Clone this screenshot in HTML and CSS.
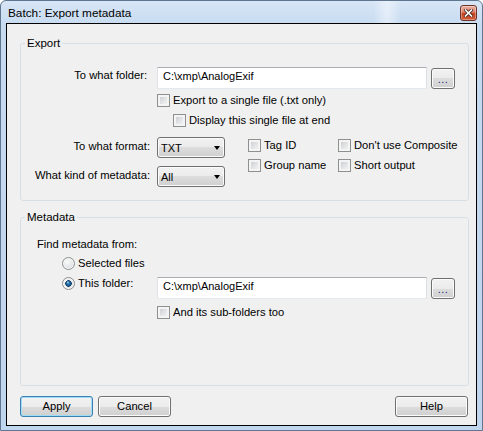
FILE: index.html
```html
<!DOCTYPE html>
<html>
<head>
<meta charset="utf-8">
<title>Batch: Export metadata</title>
<link rel="stylesheet" href="styles.css">
</head>
<body>
<div class="window">
  <div class="titlebar">
    <span class="title">Batch: Export metadata</span>
    <span class="close">
      <svg width="9" height="8" viewBox="0 0 9 8">
        <path d="M1.5 1 L7.5 7 M7.5 1 L1.5 7" stroke="#4a2a22" stroke-width="3.2" stroke-linecap="square"/>
        <path d="M1.5 1 L7.5 7 M7.5 1 L1.5 7" stroke="#ffffff" stroke-width="1.6" stroke-linecap="square"/>
      </svg>
    </span>
  </div>
  <div class="client">
    <fieldset class="group group-export">
      <legend>Export</legend>
      <div class="row">
        <label class="lbl lbl-folder">To what folder:</label>
        <div class="textbox">C:\xmp\AnalogExif</div>
        <span class="browse">...</span>
      </div>
      <div class="check single"><span class="cb"></span>Export to a single file (.txt only)</div>
      <div class="check display"><span class="cb"></span>Display this single file at end</div>
      <div class="options">
        <div class="combos">
          <label class="clbl">To what format:</label>
          <div class="combo"><span>TXT</span><span class="arrow"></span></div>
          <label class="clbl">What kind of metadata:</label>
          <div class="combo"><span>All</span><span class="arrow"></span></div>
        </div>
        <div class="checks">
          <div class="check"><span class="cb"></span>Tag ID</div>
          <div class="check"><span class="cb"></span>Don't use Composite</div>
          <div class="check"><span class="cb"></span>Group name</div>
          <div class="check"><span class="cb"></span>Short output</div>
        </div>
      </div>
    </fieldset>
    <fieldset class="group group-meta">
      <legend>Metadata</legend>
      <div class="find">Find metadata from:</div>
      <div class="radio selected-files"><span class="rb"></span>Selected files</div>
      <div class="row row-this">
        <div class="radio this-folder"><span class="rb checked"></span>This folder:</div>
        <div class="textbox">C:\xmp\AnalogExif</div>
        <span class="browse">...</span>
      </div>
      <div class="check subfolders"><span class="cb"></span>And its sub-folders too</div>
    </fieldset>
    <div class="buttons">
      <button class="btn default">Apply</button>
      <button class="btn">Cancel</button>
      <span class="spacer"></span>
      <button class="btn help">Help</button>
    </div>
  </div>
</div>
</body>
</html>
```
FILE: styles.css
```css
html, body {
  margin: 0;
  padding: 0;
  background: #ffffff;
}
body {
  font-family: "Liberation Sans", Arial, sans-serif;
  font-size: 11.2px;
  color: #000;
}
.window {
  width: 483px;
  height: 431px;
  box-sizing: border-box;
  border: 1px solid #60758e;
  border-radius: 6px 6px 0 0;
  background: linear-gradient(#d7e6f6 0, #c6daf0 26px, #c0d5ee 100%);
  padding: 0 5px 4px 5px;
  display: flex;
  flex-direction: column;
  overflow: hidden;
}
.titlebar {
  height: 22px;
  flex: none;
  display: flex;
  align-items: flex-start;
  margin: 0 -5px;
  padding: 0 5px;
  background: linear-gradient(to right, rgba(255,255,255,0) 372px, rgba(255,255,255,0.45) 386px, rgba(255,255,255,0) 400px);
}
.title {
  margin-left: 2px;
  padding-top: 5px;
  line-height: 15px;
  white-space: nowrap;
  font-size: 11.8px;
}
.close {
  margin-left: auto;
  margin-top: 4px;
  width: 17px;
  height: 16px;
  box-sizing: border-box;
  border: 1px solid #6e3326;
  border-radius: 3px;
  background: linear-gradient(#ebb2a3 0, #dc8069 45%, #c7441f 52%, #cf5a35 100%);
  box-shadow: inset 0 0 0 1px rgba(255,255,255,0.35);
  display: flex;
  align-items: center;
  justify-content: center;
}
.client {
  flex: 1;
  border: 1px solid #000;
  background: #f0f0f0;
  display: flex;
  flex-direction: column;
  padding: 0 7px 8px 13px;
  min-height: 0;
}
.group {
  margin: 0;
  padding: 0;
  border: 1px solid #d5dfe5;
  border-radius: 3px;
  min-width: 0;
}
.group legend {
  padding: 0 2px;
  margin-left: 4px;
  line-height: 15px;
  font-size: 11.5px;
}
.group-export {
  margin-top: 12px;
  padding: 16px 0 13px 0;
}
.group-meta {
  margin-top: 9px;
  padding: 11px 0 0 0;
  flex: 1;
}
.row {
  display: flex;
  align-items: flex-start;
}
.lbl {
  width: 129px;
  margin-right: 7px;
  box-sizing: border-box;
  text-align: right;
  line-height: 15px;
  flex: none;
  white-space: nowrap;
  padding-top: 1px;
}
.lbl-folder {
  padding-right: 3px;
}
.textbox {
  width: 270px;
  height: 22px;
  box-sizing: border-box;
  border: 1px solid;
  border-color: #abadb3 #dbdfe6 #e3e9ef #e2e3ea;
  background: #fff;
  font-size: 11px;
  line-height: 17px;
  padding-left: 5px;
  flex: none;
}
.browse {
  margin-left: 4px;
  margin-top: 1px;
  width: 24px;
  height: 21px;
  box-sizing: border-box;
  border: 1px solid #707070;
  border-radius: 3px;
  background: linear-gradient(#f2f2f2 0, #ebebeb 50%, #dddddd 50%, #cfcfcf 100%);
  box-shadow: inset 0 0 0 1px #fbfbfb;
  text-align: center;
  font-size: 11px;
  line-height: 19px;
  padding-top: 1px;
  color: #1b1b7a;
  letter-spacing: 0.5px;
  flex: none;
}
.check {
  display: flex;
  align-items: center;
  height: 15px;
  line-height: 15px;
  white-space: nowrap;
}
.cb {
  width: 13px;
  height: 13px;
  box-sizing: border-box;
  margin-right: 3px;
  flex: none;
  border: 1px solid #8e8f8f;
  background: linear-gradient(135deg, #c3c6cb 0%, #e6e7e9 60%, #f6f6f6 100%);
  box-shadow: inset 0 0 0 2px #f4f4f4;
}
.single {
  margin-left: 136px;
  margin-top: 4px;
}
.display {
  margin-left: 152px;
  margin-top: 5px;
}
.options {
  display: flex;
  align-items: flex-start;
  margin-top: 9px;
}
.combos {
  display: grid;
  grid-template-columns: 129px 68px;
  column-gap: 7px;
  row-gap: 8px;
}
.clbl {
  text-align: right;
  line-height: 15px;
  padding-top: 2px;
  white-space: nowrap;
}
.combo {
  height: 21px;
  box-sizing: border-box;
  border: 1px solid #707070;
  border-radius: 3px;
  background: linear-gradient(#f2f2f2 0, #ebebeb 50%, #dddddd 50%, #cfcfcf 100%);
  box-shadow: inset 0 0 0 1px #fbfbfb;
  font-size: 11px;
  line-height: 19px;
  padding: 1px 0 0 3px;
  display: flex;
  align-items: flex-start;
}
.arrow {
  margin-left: auto;
  margin-right: 4px;
  margin-top: 7px;
  width: 0;
  height: 0;
  border-left: 3.5px solid transparent;
  border-right: 3.5px solid transparent;
  border-top: 4px solid #000;
}
.checks {
  display: grid;
  grid-template-columns: 90px auto;
  row-gap: 5px;
  margin-left: 23px;
  margin-top: 1px;
}
.find {
  margin-left: 16px;
  line-height: 15px;
  padding-top: 1px;
}
.radio {
  display: flex;
  align-items: center;
  height: 15px;
  line-height: 15px;
  white-space: nowrap;
  margin-left: 41px;
}
.selected-files {
  margin-top: 4px;
}
.row-this {
  margin-top: 5px;
}
.this-folder {
  width: 95px;
  flex: none;
}
.row-this .textbox {
  margin-top: 1px;
}
.row-this .browse {
  margin-top: 2px;
}
.rb {
  width: 13px;
  height: 13px;
  box-sizing: border-box;
  border-radius: 50%;
  margin-right: 3px;
  flex: none;
  border: 1px solid #8e8f8f;
  background: radial-gradient(circle at 40% 35%, #fafafa 0, #e4e5e7 55%, #cfd1d4 100%);
  box-shadow: inset 0 0 0 1px #f6f6f6;
}
.rb.checked {
  background:
    radial-gradient(circle at 45% 40%, #a6e2fb 0, rgba(166,226,251,0) 1.6px),
    radial-gradient(circle at 50% 50%, #2f7cb6 0, #17588d 2.2px, #0f3c68 3px, rgba(15,60,104,0) 3.5px),
    radial-gradient(circle at 40% 35%, #fafafa 0, #e4e5e7 55%, #cfd1d4 100%);
}
.subfolders {
  margin-left: 136px;
  margin-top: 6px;
}
.buttons {
  display: flex;
  margin-top: 10px;
  gap: 5px;
  flex: none;
}
.spacer {
  flex: 1;
}
.btn {
  width: 73px;
  height: 21px;
  box-sizing: border-box;
  border: 1px solid #707070;
  border-radius: 3px;
  background: linear-gradient(#f2f2f2 0, #ebebeb 50%, #dddddd 50%, #cfcfcf 100%);
  box-shadow: inset 0 0 0 1px #fcfcfc;
  font-family: "Liberation Sans", Arial, sans-serif;
  font-size: 11.2px;
  line-height: 19px;
  color: #000;
  padding: 0;
  margin: 0;
}
.btn.default {
  border-color: #3c7fb1;
  box-shadow: inset 0 0 0 1px #9fdcf5;
}
.btn.help {
  margin-right: 1px;
}
```
